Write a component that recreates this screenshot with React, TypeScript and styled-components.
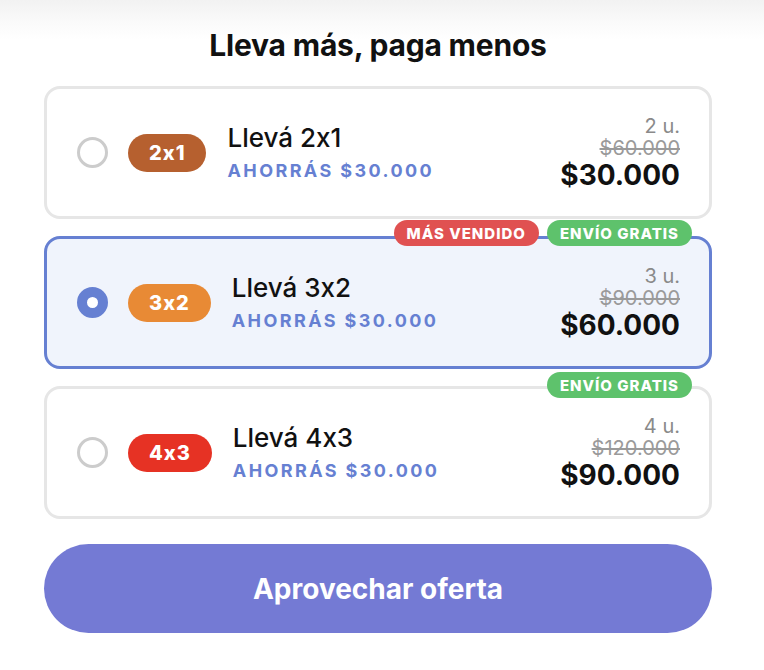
import React, { useState } from "react";
import styled, { createGlobalStyle } from "styled-components";

const GlobalStyle = createGlobalStyle`
  body {
    margin: 0;
    background: linear-gradient(to bottom, #f2f2f2 0px, #fafafa 22px, #ffffff 40px) no-repeat #ffffff;
    font-family: Inter, "Noto Sans", "Liberation Sans", sans-serif;
    font-feature-settings: "calt" 0;
    color: #111111;
  }
`;

const Page = styled.div`
  width: 668px;
  padding: 27px 0 0 44px;
`;

const Title = styled.h2`
  margin: 0 0 22px;
  text-align: center;
  font-size: 30px;
  line-height: 37px;
  font-weight: 700;
  letter-spacing: -0.2px;
  color: #111111;
`;

const List = styled.div`
  display: flex;
  flex-direction: column;
  gap: 17px;
`;

const Card = styled.div<{ $active: boolean }>`
  position: relative;
  box-sizing: border-box;
  height: 133px;
  display: flex;
  align-items: center;
  padding: 0 29px 0 30px;
  border: 3px solid ${(p) => (p.$active ? "#6680d2" : "#e6e6e6")};
  border-radius: 16px;
  background: ${(p) => (p.$active ? "#f0f4fc" : "#ffffff")};
  cursor: pointer;
`;

const Radio = styled.span<{ $active: boolean }>`
  box-sizing: border-box;
  width: 31px;
  height: 31px;
  border-radius: 50%;
  flex-shrink: 0;
  border: ${(p) => (p.$active ? "10px solid #6680d2" : "3px solid #cccccc")};
  background: #ffffff;
`;

const Badge = styled.span<{ $color: string }>`
  margin-left: 20px;
  height: 38px;
  padding: 0 21px;
  border-radius: 19px;
  display: flex;
  align-items: center;
  background: ${(p) => p.$color};
  color: #ffffff;
  font-size: 20px;
  font-weight: 800;
  letter-spacing: 1px;
`;

const Info = styled.div`
  margin-left: 21px;
  display: flex;
  flex-direction: column;
  gap: 7px;
  flex: 1;
`;

const Name = styled.span`
  font-size: 26px;
  font-weight: 500;
  line-height: 30px;
  color: #111111;
`;

const Saving = styled.span`
  font-size: 18px;
  font-weight: 700;
  line-height: 22px;
  letter-spacing: 2.4px;
  color: #6680d2;
`;

const Prices = styled.div`
  display: flex;
  flex-direction: column;
  align-items: flex-end;
  margin-top: 2px;
`;

const Units = styled.span`
  font-size: 20px;
  line-height: 22px;
  color: #8a8a8a;
`;

const OldPrice = styled.span`
  font-size: 20px;
  line-height: 22px;
  color: #9a9a9a;
  text-decoration: line-through;
`;

const Price = styled.span`
  font-size: 28px;
  line-height: 33px;
  font-weight: 700;
  color: #111111;
`;

const Tags = styled.div<{ $top: number }>`
  position: absolute;
  top: ${(p) => p.$top}px;
  right: 17px;
  display: flex;
  gap: 8px;
`;

const Tag = styled.span<{ $color: string }>`
  height: 26px;
  padding: 0 13px;
  border-radius: 13px;
  display: flex;
  align-items: center;
  background: ${(p) => p.$color};
  color: #ffffff;
  font-size: 15px;
  font-weight: 800;
  letter-spacing: 1px;
`;

const CTA = styled.button`
  margin-top: 25px;
  width: 100%;
  height: 89px;
  border: none;
  border-radius: 45px;
  background: #747ad4;
  color: #ffffff;
  font-family: inherit;
  font-size: 28px;
  font-weight: 700;
  cursor: pointer;
`;

type Offer = {
  id: string;
  label: string;
  color: string;
  units: number;
  old: string;
  price: string;
  tags: { text: string; color: string }[];
};

const offers: Offer[] = [
  { id: "2x1", label: "2x1", color: "#b6602f", units: 2, old: "$60.000", price: "$30.000", tags: [] },
  {
    id: "3x2",
    label: "3x2",
    color: "#e88a35",
    units: 3,
    old: "$90.000",
    price: "$60.000",
    tags: [
      { text: "MÁS VENDIDO", color: "#e05151" },
      { text: "ENVÍO GRATIS", color: "#5ec26c" },
    ],
  },
  {
    id: "4x3",
    label: "4x3",
    color: "#e63224",
    units: 4,
    old: "$120.000",
    price: "$90.000",
    tags: [{ text: "ENVÍO GRATIS", color: "#5ec26c" }],
  },
];

export default function App() {
  const [selected, setSelected] = useState("3x2");
  return (
    <>
      <GlobalStyle />
      <Page>
        <Title>Lleva más, paga menos</Title>
        <List>
          {offers.map((o) => {
            const active = selected === o.id;
            return (
              <Card key={o.id} $active={active} onClick={() => setSelected(o.id)}>
                {o.tags.length > 0 && (
                  <Tags $top={active ? -19 : -17}>
                    {o.tags.map((t) => (
                      <Tag key={t.text} $color={t.color}>
                        {t.text}
                      </Tag>
                    ))}
                  </Tags>
                )}
                <Radio $active={active} />
                <Badge $color={o.color}>{o.label}</Badge>
                <Info>
                  <Name>Llevá {o.label}</Name>
                  <Saving>AHORRÁS $30.000</Saving>
                </Info>
                <Prices>
                  <Units>{o.units} u.</Units>
                  <OldPrice>{o.old}</OldPrice>
                  <Price>{o.price}</Price>
                </Prices>
              </Card>
            );
          })}
        </List>
        <CTA>Aprovechar oferta</CTA>
      </Page>
    </>
  );
}
